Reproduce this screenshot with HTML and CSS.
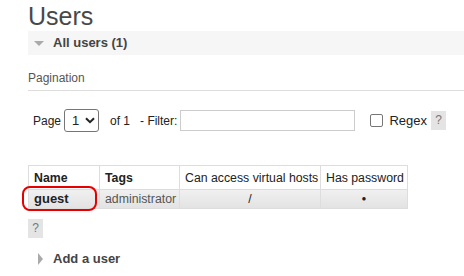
FILE: index.html
```html
<!DOCTYPE html>
<html lang="en">
<head>
    <meta charset="UTF-8">
    <title>Users</title>
    <link rel="stylesheet" href="styles.css">
</head>
<body>
    <div class="main">
        <h1>Users</h1>

        <!-- 사용자 목록 섹션 -->
        <div class="section">
            <h2 class="toggle open">All users (1)</h2>
            <div class="hider">
                <h3>Pagination</h3>
                <div class="pagination">
                    <span>Page</span>
                    <span class="select">1 <svg width="10" height="7" viewBox="0 0 10 7"><path d="M1 1.2 L5 5.2 L9 1.2" fill="none" stroke="#222" stroke-width="2"/></svg></span>
                    <span class="of">of 1</span>
                    <span class="filter-label">- Filter:</span>
                    <input type="text" class="filter">
                    <span class="check"></span>
                    <span class="regex">Regex</span>
                    <span class="help">?</span>
                </div>

                <table class="list">
                    <colgroup>
                        <col class="c-name">
                        <col class="c-tags">
                        <col class="c-vhosts">
                        <col class="c-pw">
                    </colgroup>
                    <thead>
                        <tr>
                            <th>Name</th>
                            <th>Tags</th>
                            <th class="plain">Can access virtual hosts</th>
                            <th class="plain">Has password</th>
                        </tr>
                    </thead>
                    <tbody>
                        <tr>
                            <td class="name"><span class="mark">guest</span></td>
                            <td class="tags">administrator</td>
                            <td class="center">/</td>
                            <td class="center dot">&#9679;</td>
                        </tr>
                    </tbody>
                </table>
                <span class="help help-below">?</span>
            </div>
        </div>

        <div class="section">
            <h2 class="toggle closed">Add a user</h2>
        </div>
    </div>
</body>
</html>
```

FILE: styles.css
```css
body {
    margin: 0;
    font-family: "Liberation Sans", Arial, sans-serif;
    color: #484848;
}

.main {
    padding: 0 0 0 28px;
}

h1 {
    font-size: 25px;
    font-weight: normal;
    margin: 0;
    padding-top: 2px;
    line-height: 29px;
    color: #484848;
}

.toggle {
    position: relative;
    font-size: 13px;
    font-weight: bold;
    margin: 0;
    padding-left: 25px;
    color: #444;
}

.toggle.open {
    background: #f6f6f6;
    height: 24px;
    line-height: 24px;
}

.toggle.open::before {
    content: "";
    position: absolute;
    left: 6px;
    top: 10px;
    border-left: 5px solid transparent;
    border-right: 5px solid transparent;
    border-top: 5px solid #aaa;
}

.toggle.closed {
    margin-top: 12px;
    line-height: 18px;
}

.toggle.closed::before {
    content: "";
    position: absolute;
    left: 10px;
    top: 3px;
    border-top: 6px solid transparent;
    border-bottom: 6px solid transparent;
    border-left: 5px solid #aaa;
}

h3 {
    font-size: 12px;
    font-weight: normal;
    color: #555;
    margin: 16px 0 0 0;
    padding-bottom: 5px;
    line-height: 14px;
    border-bottom: 1px solid #ddd;
}

.pagination {
    display: flex;
    align-items: center;
    font-size: 12px;
    color: #222;
    margin: 18px 0 0 5px;
    height: 23px;
}

.select {
    display: flex;
    align-items: center;
    gap: 6px;
    box-sizing: border-box;
    width: 35px;
    height: 23px;
    margin-left: 3px;
    padding-left: 7px;
    border: 1px solid #767676;
    border-radius: 3px;
    font-size: 13px;
}

.of {
    margin-left: 11px;
}

.filter-label {
    margin-left: 10px;
}

.filter {
    box-sizing: border-box;
    width: 175px;
    height: 21px;
    margin: 0 0 0 3px;
    border: 1px solid #ccc;
    padding: 0;
}

.check {
    box-sizing: border-box;
    width: 13px;
    height: 13px;
    margin-left: 15px;
    border: 1px solid #767676;
    border-radius: 2px;
}

.regex {
    margin-left: 6px;
    font-size: 13px;
}

.help {
    display: inline-block;
    width: 15px;
    height: 19px;
    line-height: 19px;
    margin-left: 4px;
    background: #e4e4e4;
    color: #777;
    text-align: center;
    font-size: 12px;
}

.list {
    table-layout: fixed;
    width: 379px;
    border-collapse: collapse;
    margin-top: 33px;
    font-size: 12.3px;
    color: #222;
}

.c-name { width: 71px; }
.c-tags { width: 80px; }
.c-vhosts { width: 141px; }
.c-pw { width: 87px; }

.list th,
.list td {
    border: 1px solid #ddd;
    padding: 0 0 0 5px;
    text-align: left;
    white-space: nowrap;
    overflow: hidden;
}

.list th {
    height: 23px;
    font-weight: bold;
    background: #fff;
}

.list th.plain {
    font-weight: normal;
    padding-left: 5px;
}

.list tbody tr {
    background: linear-gradient(#f0f0f0, #e2e2e2);
}

.list td {
    height: 18px;
    line-height: 16px;
}

.list td.name {
    position: relative;
    overflow: visible;
    font-weight: bold;
    font-size: 13px;
}

.mark::after {
    content: "";
    position: absolute;
    left: -7px;
    top: -4px;
    width: 71px;
    height: 21px;
    border: 2px solid #e60000;
    border-radius: 8px;
}

.list td.tags {
    color: #555;
}

.list td.center {
    text-align: center;
    padding: 0;
}

.list td.dot {
    font-size: 8px;
}

.help-below {
    display: block;
    margin: 10px 0 0 0;
}
```
